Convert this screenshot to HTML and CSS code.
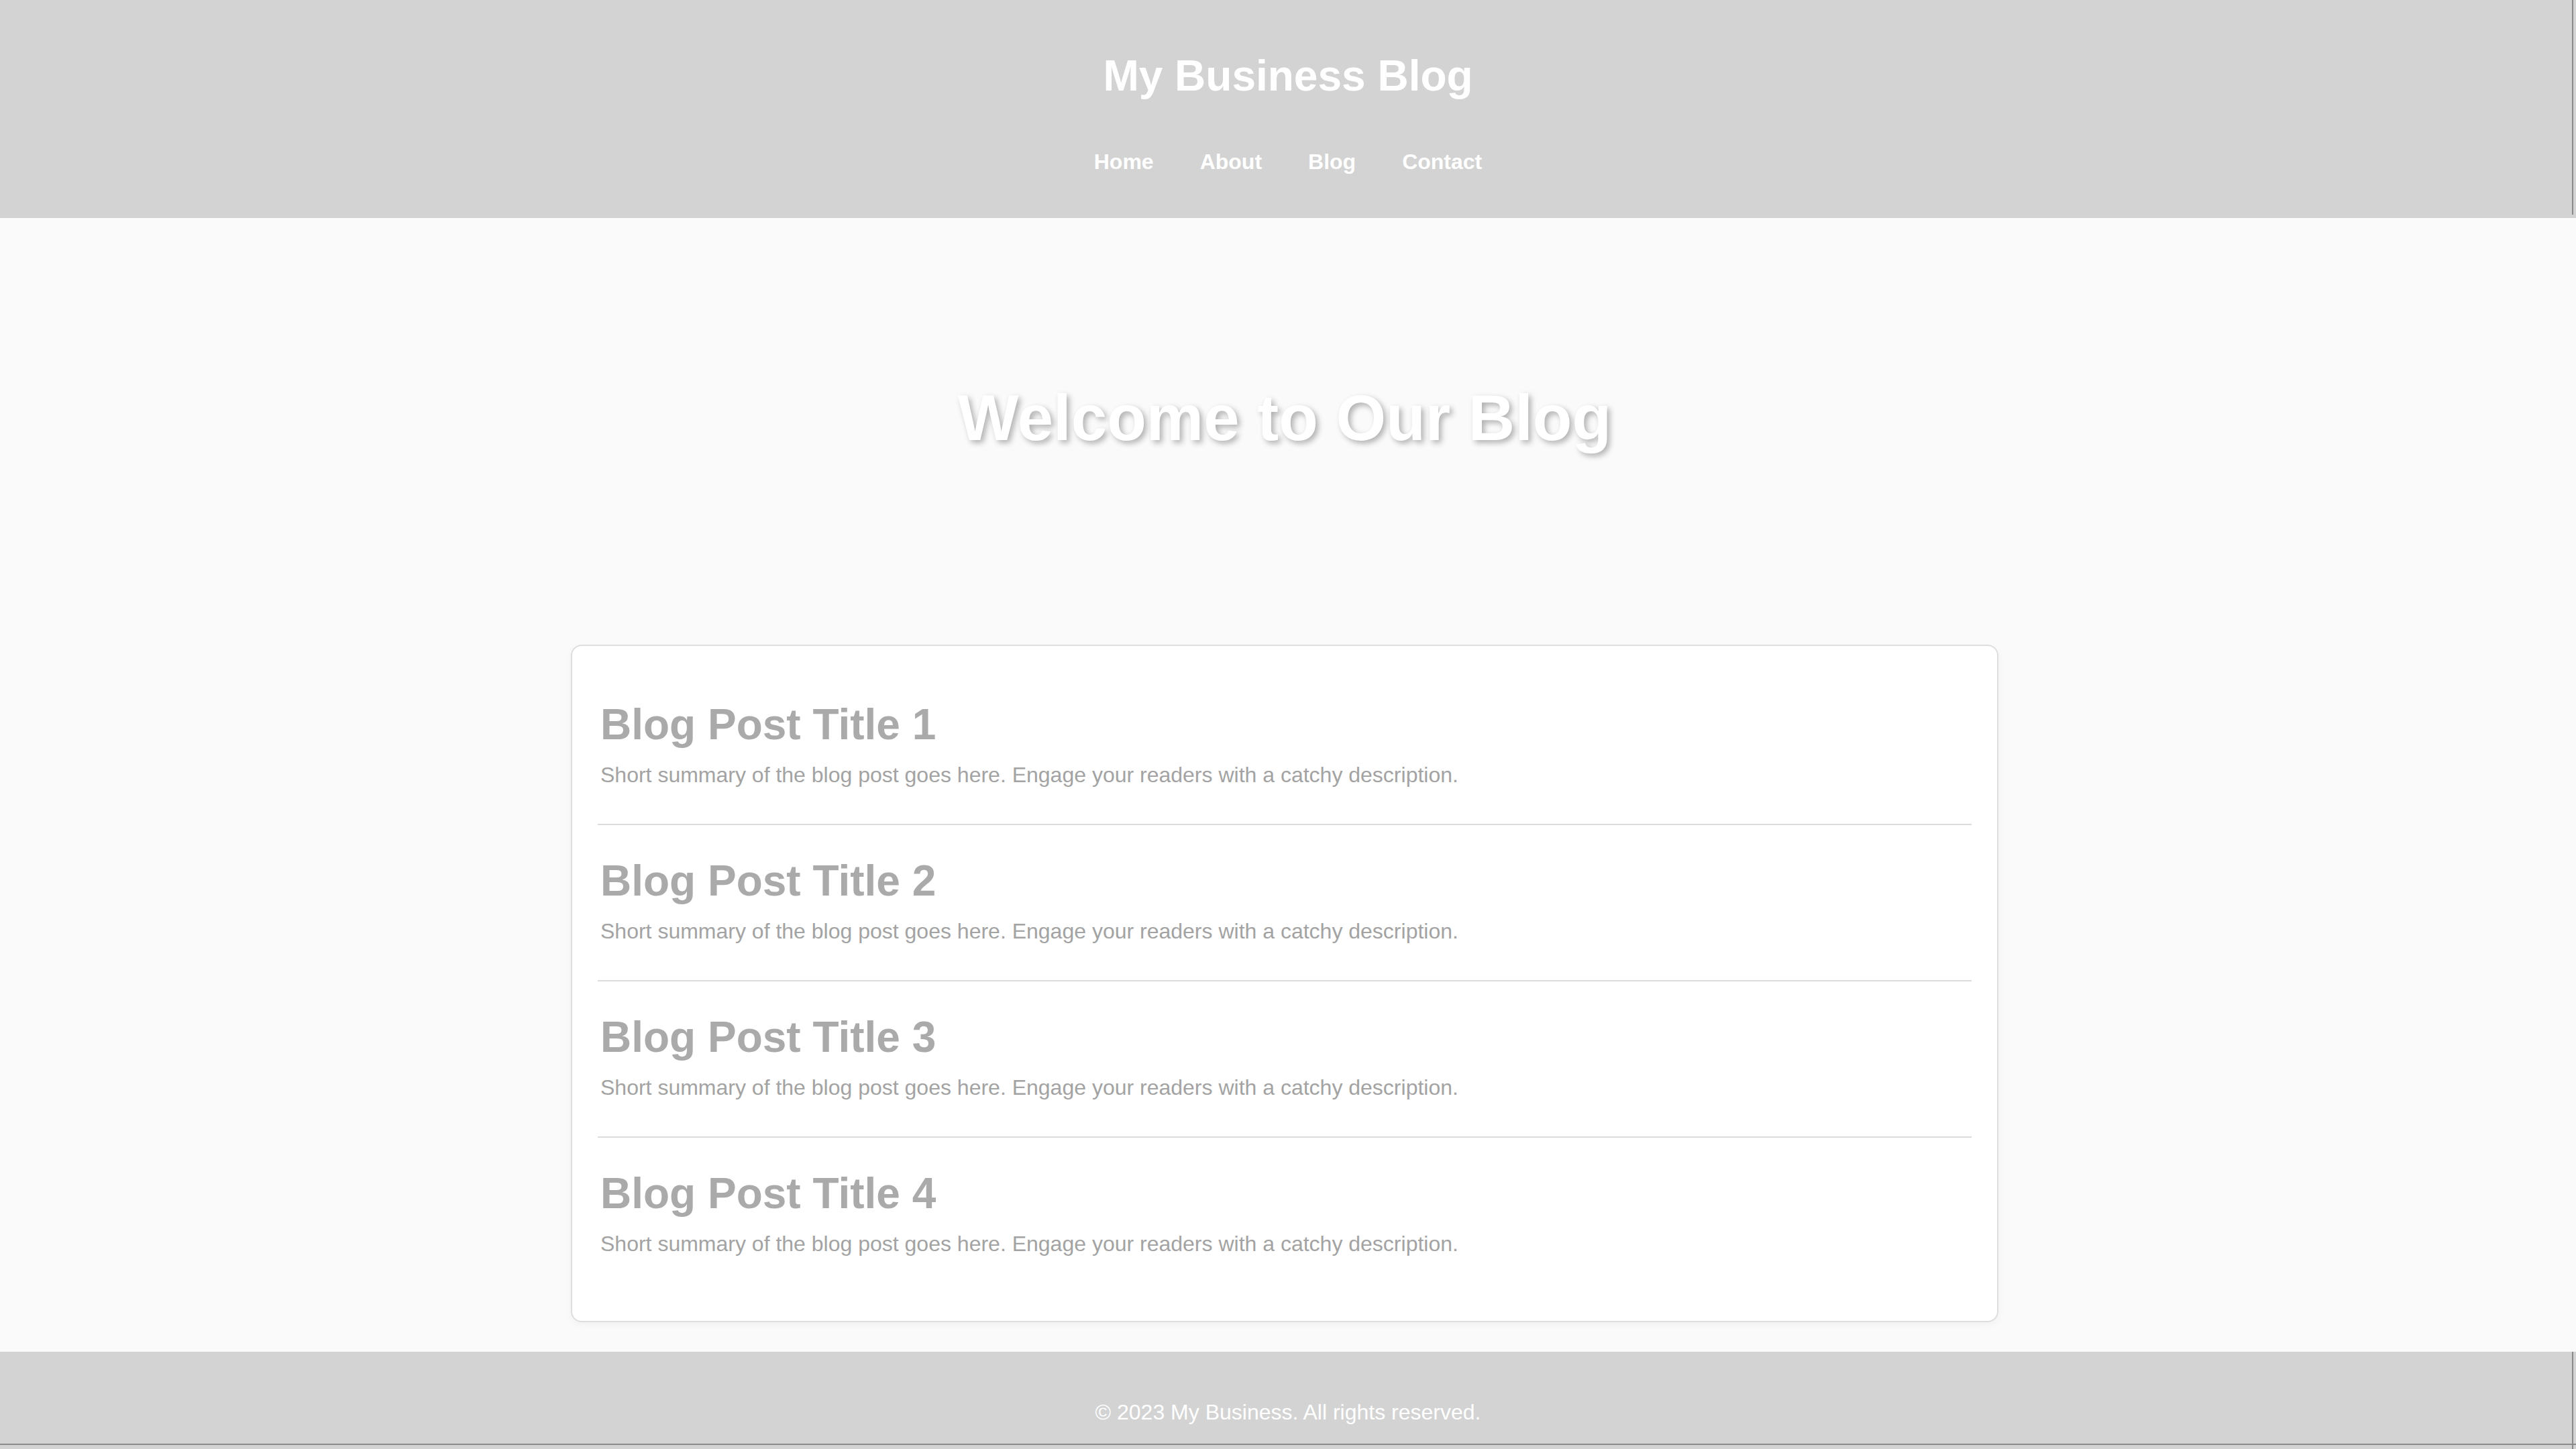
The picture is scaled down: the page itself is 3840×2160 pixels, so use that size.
FILE: index.html
```html
<!DOCTYPE html>
<html lang="en">
<head>
<meta charset="utf-8">
<title>My Business Blog</title>
<link rel="stylesheet" href="styles.css">
</head>
<body>
<header class="site-header">
  <h1 class="site-title">My Business Blog</h1>
  <nav class="site-nav">
    <a href="#" class="nav-link">Home</a>
    <a href="#" class="nav-link">About</a>
    <a href="#" class="nav-link">Blog</a>
    <a href="#" class="nav-link">Contact</a>
  </nav>
</header>
<div class="page">
  <section class="hero">
    <h1 class="hero-title">Welcome to Our Blog</h1>
  </section>
  <main class="posts">
    <article class="post">
      <h2 class="post-title">Blog Post Title 1</h2>
      <p class="post-summary">Short summary of the blog post goes here. Engage your readers with a catchy description.</p>
    </article>
    <article class="post">
      <h2 class="post-title">Blog Post Title 2</h2>
      <p class="post-summary">Short summary of the blog post goes here. Engage your readers with a catchy description.</p>
    </article>
    <article class="post">
      <h2 class="post-title">Blog Post Title 3</h2>
      <p class="post-summary">Short summary of the blog post goes here. Engage your readers with a catchy description.</p>
    </article>
    <article class="post">
      <h2 class="post-title">Blog Post Title 4</h2>
      <p class="post-summary">Short summary of the blog post goes here. Engage your readers with a catchy description.</p>
    </article>
  </main>
</div>
<footer class="site-footer">
  <p class="footer-text">&copy; 2023 My Business. All rights reserved.</p>
</footer>
</body>
</html>
```
FILE: styles.css
```css
html, body {
  margin: 0;
  padding: 0;
}

body {
  background: #fafafa;
  font-family: "Liberation Sans", Arial, sans-serif;
  color: #333;
}

.site-header {
  position: relative;
  background: #d3d3d3;
  color: #fff;
  text-align: center;
  padding: 76px 0 65px;
}

.site-header::after {
  content: "";
  position: absolute;
  top: 0;
  bottom: 5px;
  right: 4px;
  width: 2px;
  background: #8a8a8a;
}

.site-title {
  margin: 0 0 73px;
  font-size: 64px;
  font-weight: bold;
  line-height: normal;
}

.site-nav {
  display: flex;
  justify-content: center;
  gap: 69px;
  font-size: 32px;
  line-height: normal;
}

.nav-link {
  color: #fff;
  font-weight: bold;
  text-decoration: none;
}

.page {
  padding-right: 10px;
}

.hero {
  text-align: center;
  padding: 243px 0 243px;
}

.hero-title {
  margin: 0;
  font-size: 96px;
  font-weight: bold;
  line-height: normal;
  color: #fff;
  text-shadow: 4px 4px 8px rgba(0, 0, 0, 0.3);
}

.posts {
  box-sizing: border-box;
  width: 2128px;
  margin: 40px auto 44px;
  padding: 34px 38px 42px;
  background: #fff;
  border: 2px solid #dedede;
  border-radius: 16px;
  box-shadow: 0 4px 12px rgba(0, 0, 0, 0.04);
}

.post {
  padding: 46px 0 40px;
  border-bottom: 2px solid #dcdcdc;
}

.post:last-child {
  border-bottom: none;
}

.post-title {
  margin: 0 0 20px;
  padding-left: 4px;
  font-size: 64px;
  font-weight: bold;
  line-height: normal;
  color: #aaaaaa;
}

.post-summary {
  margin: 0 0 14px;
  padding-left: 4px;
  font-size: 32px;
  line-height: normal;
  color: #a3a3a3;
}

.site-footer {
  position: relative;
  background: #d3d3d3;
  color: #fff;
  text-align: center;
  padding: 40px 0;
}

.site-footer::before {
  content: "";
  position: absolute;
  top: 0;
  bottom: 0;
  right: 4px;
  width: 2px;
  background: #8a8a8a;
}

.site-footer::after {
  content: "";
  position: absolute;
  left: 0;
  right: 0;
  top: 137px;
  height: 2px;
  background: #8a8a8a;
}

.footer-text {
  margin: 32px 0;
  font-size: 32px;
  line-height: normal;
}
```
